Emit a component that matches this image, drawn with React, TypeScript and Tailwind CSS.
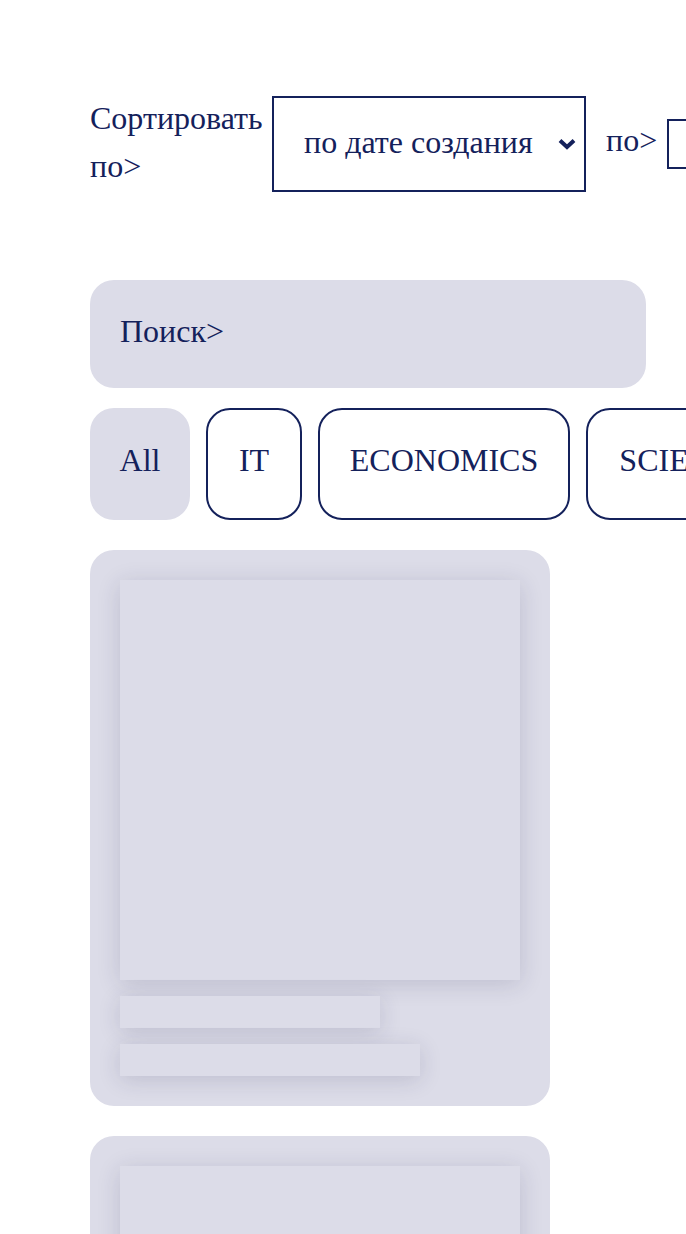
const categories = [
	{ name: 'IT', w: 'w-[96px]' },
	{ name: 'ECONOMICS', w: 'w-[252px]' },
	{ name: 'SCIENCE', w: 'w-[200px]' },
];

function Card() {
	return (
		<div className="w-[460px] shrink-0 rounded-[24px] bg-[#dcdce8] p-[30px] flex flex-col gap-[16px]">
			<div className="w-[400px] h-[400px] bg-[#dcdce8] shadow-[0_4px_22px_rgba(40,40,80,0.16)]"></div>
			<div className="w-[260px] h-[32px] bg-[#dcdce8] shadow-[0_4px_22px_rgba(40,40,80,0.16)]"></div>
			<div className="w-[300px] h-[32px] bg-[#dcdce8] shadow-[0_4px_22px_rgba(40,40,80,0.16)]"></div>
		</div>
	);
}

export default function App() {
	return (
		<div className="w-full min-h-screen overflow-hidden bg-white text-[#14215b] text-[32px] leading-[48px] pt-[96px] pl-[90px] pb-[40px] font-['Liberation_Serif','Times_New_Roman',serif]">
			{/* sort row */}
			<div className="flex items-center whitespace-nowrap">
				<div className="w-[182px] shrink-0 whitespace-normal -mt-[4px]">Сортировать по&gt;</div>
				<div className="w-[314px] h-[96px] shrink-0 border-2 border-[#14215b] flex items-center justify-between pl-[30px] pr-[7px]">
					<span className="-mt-[4px]">по дате создания</span>
					<svg width="20" height="12" viewBox="0 0 20 12">
						<polyline points="3,2.5 10,9 17,2.5" fill="none" stroke="#14215b" strokeWidth="4" strokeLinejoin="miter" />
					</svg>
				</div>
				<div className="ml-[20px] shrink-0 -mt-[8px]">по&gt;</div>
				<div className="ml-[10px] w-[200px] h-[50px] shrink-0 border-2 border-[#14215b]"></div>
			</div>

			{/* search */}
			<div className="mt-[88px] w-[556px] rounded-[24px] bg-[#dcdce8] px-[30px] pt-[27px] pb-[33px]">Поиск&gt;</div>

			{/* categories */}
			<div className="mt-[20px] flex gap-[16px] whitespace-nowrap">
				<div className="w-[100px] shrink-0 rounded-[24px] bg-[#dcdce8] border-2 border-transparent text-center pt-[26px] pb-[34px]">All</div>
				{categories.map((c) => (
					<div key={c.name} className={`${c.w} shrink-0 rounded-[24px] border-2 border-[#14215b] text-center pt-[26px] pb-[34px]`}>
						{c.name}
					</div>
				))}
			</div>

			{/* cards */}
			<div className="mt-[30px] flex flex-col gap-[30px]">
				<Card />
				<Card />
			</div>
		</div>
	);
}
